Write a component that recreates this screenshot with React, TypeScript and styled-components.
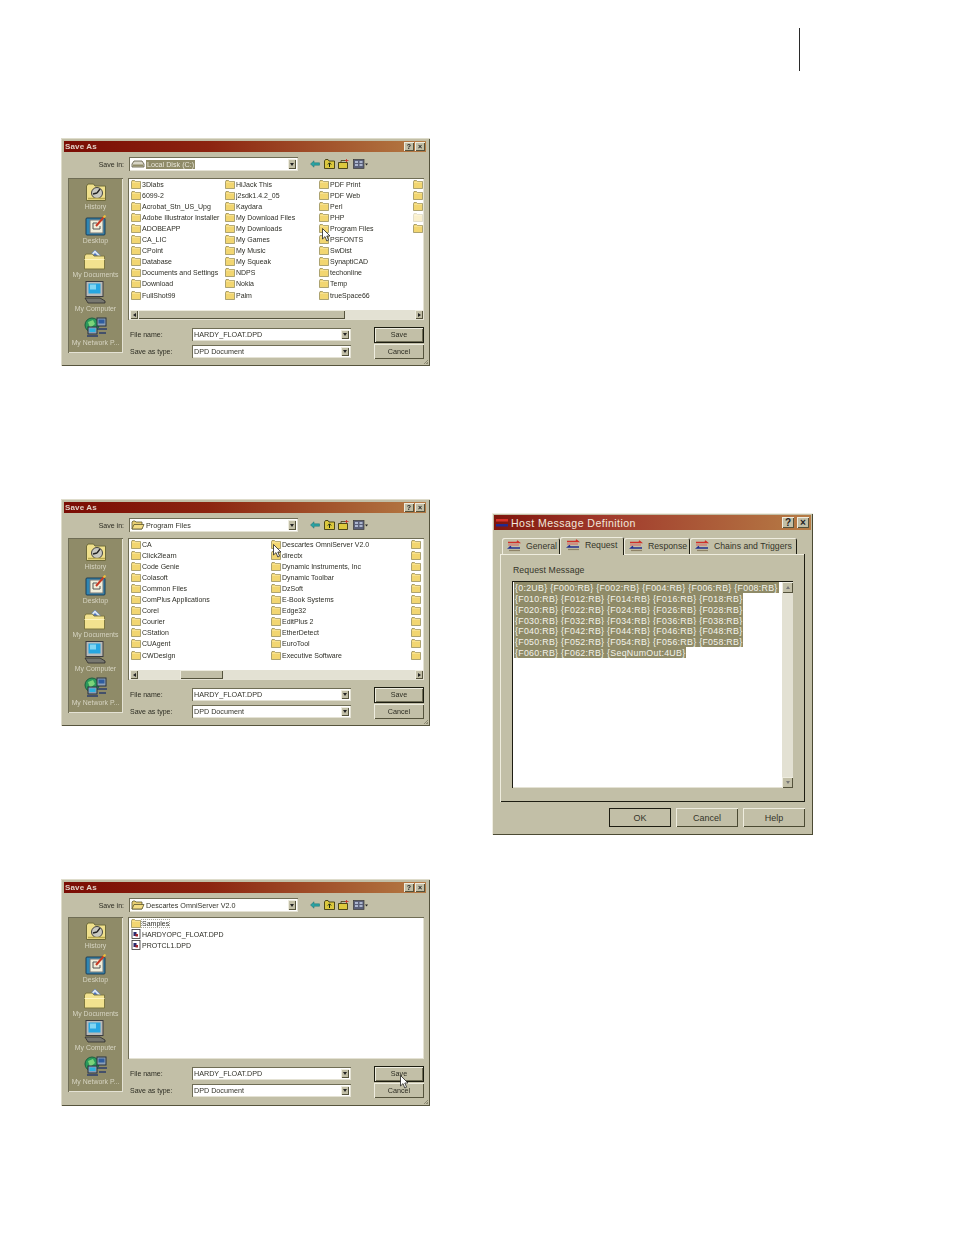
import type { ReactNode } from 'react';
import { createGlobalStyle, styled } from 'styled-components';

const GlobalStyle = createGlobalStyle`
  html, body { margin: 0; padding: 0; background: #fff; }
  body { font-family: "Liberation Sans", Arial, sans-serif; color: #1c1c14; }
`;

const FACE = '#c2bfa7';
const OLIVE = '#8f8b68';
const raised = `inset 1px 1px 0 #eeecdf, inset -1px -1px 0 #55533c`;
const sunken = `inset 1px 1px 0 #6f6d55, inset -1px -1px 0 #e4e2d4`;

const Page = styled.div`
  width: 954px;
  height: 1235px;
  overflow: hidden;
  padding-top: 28px;
  box-sizing: border-box;
`;

const PageRule = styled.div`
  width: 1px;
  height: 43px;
  margin-left: 799px;
  background: #2a2a2a;
`;

const Columns = styled.main`
  display: grid;
  grid-template-columns: 369px 321px;
  column-gap: 62px;
  padding: 67px 0 0 61px;
  align-items: start;
`;

const LeftColumn = styled.div`
  display: flex;
  flex-direction: column;
`;

const Dialog = styled.section<{ $top: number; $height: number }>`
  position: relative;
  box-sizing: border-box;
  display: flex;
  flex-direction: column;
  height: ${({ $height }) => $height}px;
  margin-top: ${({ $top }) => $top}px;
  padding: 3px 4px 3px 3px;
  background: ${FACE};
  box-shadow: inset 1px 1px 0 #dedccb, inset -1px -1px 0 #55533c;
  filter: blur(0.4px);
  &::after {
    content: '';
    position: absolute;
    right: 2px;
    bottom: 2px;
    width: 6px;
    height: 6px;
    background: repeating-linear-gradient(135deg, transparent 0 1px, #8a8870 1px 2px);
    clip-path: polygon(100% 0, 100% 100%, 0 100%);
  }
`;

const TitleBar = styled.header`
  display: flex;
  align-items: center;
  justify-content: space-between;
  flex: none;
  height: 11px;
  padding: 0 1px;
  background: linear-gradient(90deg, #7a0c04 0%, #8c2410 40%, #b57b44 100%);
`;

const TitleText = styled.span`
  font-size: 8px;
  font-weight: 700;
  color: #e0d0c6;
  letter-spacing: 0.15px;
`;

const TitleButtons = styled.div`
  display: flex;
  gap: 1px;
`;

const TitleButton = styled.span`
  display: flex;
  align-items: center;
  justify-content: center;
  width: 10px;
  height: 9px;
  background: ${FACE};
  box-shadow: ${raised};
  font-size: 7px;
  font-weight: 700;
  line-height: 1;
  color: #222;
`;

const SaveInRow = styled.div`
  display: flex;
  align-items: center;
  flex: none;
  height: 14px;
  margin-top: 5px;
`;

const Label = styled.span<{ $width: number; $right?: boolean }>`
  flex: none;
  width: ${({ $width }) => $width}px;
  font-size: 7px;
  color: #2c2c22;
  white-space: nowrap;
  text-align: ${({ $right }) => ($right ? 'right' : 'left')};
`;

const Combo = styled.div<{ $width: number; $height: number; $left: number }>`
  display: flex;
  align-items: center;
  justify-content: space-between;
  flex: none;
  box-sizing: border-box;
  width: ${({ $width }) => $width}px;
  height: ${({ $height }) => $height}px;
  margin-left: ${({ $left }) => $left}px;
  padding: 2px;
  background: #fff;
  box-shadow: ${sunken};
`;

const ComboValue = styled.span`
  display: flex;
  align-items: center;
  gap: 1px;
  min-width: 0;
  font-size: 7.2px;
  white-space: nowrap;
  color: #33332a;
`;

const Selected = styled.span`
  padding: 0 1px;
  background: ${OLIVE};
  color: #e8e6d8;
`;

const ArrowButton = styled.span`
  display: flex;
  align-items: center;
  justify-content: center;
  flex: none;
  width: 8px;
  height: 100%;
  background: ${FACE};
  box-shadow: ${raised};
  &::after {
    content: '';
    border: 2px solid transparent;
    border-top: 3px solid #222;
    border-bottom: 0;
  }
`;

const Toolbar = styled.div`
  display: flex;
  align-items: center;
  gap: 3.5px;
  margin-left: 12px;
`;

const Body = styled.div<{ $top: number }>`
  display: flex;
  flex: 1;
  gap: 5px;
  margin-top: ${({ $top }) => $top}px;
  min-height: 0;
  padding-left: 4px;
`;

const PlacesBar = styled.nav`
  display: flex;
  flex-direction: column;
  align-items: center;
  flex: none;
  box-sizing: border-box;
  width: 55px;
  height: 175px;
  background: ${OLIVE};
  box-shadow: ${sunken};
`;

const Place = styled.div`
  display: flex;
  flex-direction: column;
  align-items: center;
  height: 34px;
  font-size: 6.9px;
  white-space: nowrap;
  color: #d6d4c2;
  line-height: 9px;
`;

const PlaceIcon = styled.div`
  display: flex;
  align-items: flex-end;
  justify-content: center;
  height: 24px;
`;

const MainArea = styled.div`
  display: flex;
  flex-direction: column;
  flex: 1;
  min-width: 0;
  padding-right: 2px;
`;

const ListFrame = styled.div<{ $height: number }>`
  display: flex;
  flex-direction: column;
  flex: none;
  box-sizing: border-box;
  height: ${({ $height }) => $height}px;
  padding: 0 1px 1px 3px;
  background: #fff;
  box-shadow: ${sunken};
  overflow: hidden;
`;

const FileGrid = styled.div<{ $col: number }>`
  display: grid;
  flex: 1;
  grid-auto-flow: column;
  grid-template-rows: repeat(11, 11.12px);
  grid-auto-columns: ${({ $col }) => $col}px;
  align-content: start;
  padding-top: 0.5px;
  overflow: hidden;
`;

const FileItem = styled.div<{ $dim?: boolean }>`
  display: flex;
  align-items: center;
  gap: 1px;
  height: 11px;
  font-size: 7px;
  white-space: nowrap;
  color: #2e2e26;
  opacity: ${({ $dim }) => ($dim ? 0.35 : 1)};
`;

const FocusName = styled.span`
  outline: 1px dotted #a8a89c;
`;

const ScrollBar = styled.div`
  display: flex;
  flex: none;
  height: 9px;
  margin-left: -1px;
  background: #e3e1d3;
`;

const ScrollEnd = styled.span<{ $dir: 'left' | 'right' }>`
  display: flex;
  align-items: center;
  justify-content: center;
  flex: none;
  width: 8px;
  background: ${FACE};
  box-shadow: ${raised};
  &::after {
    content: '';
    border: 2px solid transparent;
    ${({ $dir }) => ($dir === 'left' ? 'border-right: 3px solid #222; border-left: 0;' : 'border-left: 3px solid #222; border-right: 0;')}
  }
`;

const ScrollTrack = styled.div`
  flex: 1;
  min-width: 0;
`;

const ScrollThumb = styled.div<{ $left: number; $width: number }>`
  height: 100%;
  width: ${({ $width }) => $width}px;
  margin-left: ${({ $left }) => $left}px;
  background: ${FACE};
  box-shadow: ${raised};
`;

const FormRow = styled.div<{ $top: number }>`
  display: flex;
  align-items: center;
  height: 13px;
  margin-top: ${({ $top }) => $top}px;
  padding-left: 2px;
`;

const DialogButton = styled.button<{ $default?: boolean; $width: number; $height: number }>`
  flex: none;
  width: ${({ $width }) => $width}px;
  height: ${({ $height }) => $height}px;
  margin-left: 23px;
  padding: 0;
  border: 0;
  background: ${FACE};
  font-family: inherit;
  font-size: 7.2px;
  color: #2c2c22;
  box-shadow: ${({ $default }) => ($default ? 'inset 0 0 0 1px #1c1c10, inset 2px 2px 0 #eeecdf, inset -2px -2px 0 #6f6d55' : raised)};
`;

const Cursor = styled.svg<{ $x: number; $y: number }>`
  position: absolute;
  left: ${({ $x }) => $x}px;
  top: ${({ $y }) => $y}px;
`;

/* Host Message Definition dialog */

const HostDialog = styled.section`
  box-sizing: border-box;
  display: flex;
  flex-direction: column;
  height: 322px;
  margin-top: 375px;
  padding: 2px;
  background: ${FACE};
  box-shadow: inset 1px 1px 0 #f0eee2, inset -1px -1px 0 #4b4a33;
`;

const HostTitleBar = styled.header`
  display: flex;
  align-items: center;
  justify-content: space-between;
  flex: none;
  height: 15px;
  padding: 0 2px;
  background: linear-gradient(90deg, #7f150c 0%, #a13a2c 35%, #b67c45 100%);
`;

const HostTitle = styled.span`
  display: flex;
  align-items: center;
  gap: 2px;
  font-size: 10.6px;
  letter-spacing: 0.44px;
  color: #f1e7dc;
`;

const HostTitleButtons = styled.div`
  display: flex;
  gap: 3px;
`;

const HostTitleButton = styled(TitleButton)`
  width: 12px;
  height: 11px;
  font-size: 10px;
`;

const TabRow = styled.div`
  position: relative;
  z-index: 1;
  display: flex;
  align-items: flex-end;
  flex: none;
  height: 24px;
  padding-left: 8px;
`;

const Tab = styled.div<{ $active?: boolean; $width: number }>`
  display: flex;
  align-items: center;
  box-sizing: border-box;
  gap: 5px;
  width: ${({ $width }) => $width}px;
  height: ${({ $active }) => ($active ? 18 : 16)}px;
  padding: ${({ $active }) => ($active ? '0 0 3px 6px' : '0 0 0 5px')};
  margin-bottom: ${({ $active }) => ($active ? -1 : 0)}px;
  background: ${FACE};
  border-radius: 2px 2px 0 0;
  font-size: 8.7px;
  white-space: nowrap;
  color: #35352a;
  box-shadow: inset 1px 1px 0 #efeddf, inset -1px 0 0 #1d1d12;
`;

const TabPanel = styled.div`
  display: flex;
  flex-direction: column;
  flex: none;
  box-sizing: border-box;
  width: 305px;
  height: 248px;
  margin-left: 6px;
  padding: 11px 12px 0;
  box-shadow: inset 1px 0 0 #efeddf, inset -1px -1px 0 #1d1d12, inset 0 1px 0 #efeddf;
`;

const PanelLabel = styled.div`
  padding-left: 1px;
  font-size: 8.7px;
  line-height: 11px;
  letter-spacing: 0.1px;
  color: #35352a;
`;

const MessageBox = styled.div`
  display: flex;
  justify-content: space-between;
  box-sizing: border-box;
  flex: none;
  width: 281px;
  height: 207px;
  margin-top: 5px;
  padding: 1px 0 0 2px;
  background: #fff;
  box-shadow: inset 1px 1px 0 #1d1d12, inset -1px -1px 0 #e4e2d4;
`;

const MessageText = styled.div`
  display: flex;
  flex-direction: column;
  align-items: flex-start;
  min-width: 0;
`;

const MessageLine = styled.span`
  height: 10.85px;
  padding: 0 1px;
  background: ${OLIVE};
  font-size: 8.8px;
  line-height: 12.5px;
  letter-spacing: 0.3px;
  white-space: pre;
  color: #f4f3ea;
`;

const VerticalBar = styled.div`
  display: flex;
  flex-direction: column;
  justify-content: space-between;
  flex: none;
  width: 11px;
  background: #e3e1d3;
`;

const VerticalEnd = styled.span<{ $dir: 'up' | 'down' }>`
  display: flex;
  align-items: center;
  justify-content: center;
  height: 11px;
  background: ${FACE};
  box-shadow: ${raised};
  &::after {
    content: '';
    border: 2.5px solid transparent;
    ${({ $dir }) => ($dir === 'up' ? 'border-bottom: 3px solid #777; border-top: 0;' : 'border-top: 3px solid #777; border-bottom: 0;')}
  }
`;

const HostFooter = styled.footer`
  display: flex;
  justify-content: flex-end;
  gap: 5px;
  flex: none;
  width: 311px;
  margin-top: 6px;
`;

const HostButton = styled.button<{ $default?: boolean }>`
  width: 62px;
  height: 19px;
  padding: 0;
  border: 0;
  background: ${FACE};
  font-family: inherit;
  font-size: 9px;
  color: #35352a;
  box-shadow: ${({ $default }) => ($default ? 'inset 0 0 0 1px #1d1d12' : 'inset 1px 1px 0 #efeddf, inset -1px -1px 0 #4b4a33')};
`;

const FolderIcon = () => (
  <svg width="10" height="9" viewBox="0 0 10 9" style={{ flex: 'none' }}>
    <path d="M0.5 2V8.5H9.5V1.5H4.5L3.5 0.5H1Z" fill="#f2d671" stroke="#7a7240" strokeWidth="0.6" />
    <path d="M1 2.3H9" stroke="#fbeeb0" strokeWidth="0.6" />
  </svg>
);

const DocIcon = () => (
  <svg width="10" height="10" viewBox="0 0 10 10" style={{ flex: 'none' }}>
    <rect x="1" y="0.5" width="8" height="9" fill="#fff" stroke="#333" strokeWidth="0.8" />
    <rect x="2.5" y="3" width="3" height="4" fill="#2b2b6e" />
    <rect x="4.5" y="5" width="2.5" height="2.5" fill="#a3262a" />
  </svg>
);

const OpenFolderIcon = () => (
  <svg width="14" height="10" viewBox="0 0 14 10" style={{ flex: 'none' }}>
    <path d="M1 2V9H11V2H5L4 1H2Z" fill="#e9cf72" stroke="#5b5530" strokeWidth="0.8" />
    <path d="M3 4.5H13L11 9H1Z" fill="#f4dd85" stroke="#5b5530" strokeWidth="0.8" />
  </svg>
);

const DriveIcon = () => (
  <svg width="14" height="10" viewBox="0 0 14 10" style={{ flex: 'none' }}>
    <path d="M3 2H11L13 5V8H1V5Z" fill="#d8d6c8" stroke="#55533c" strokeWidth="0.8" />
    <rect x="2" y="5.5" width="10" height="2" fill="#8f8b68" />
  </svg>
);

const ToolIcons = () => (
  <Toolbar>
    <svg width="10" height="8" viewBox="0 0 10 8">
      <path d="M0.5 4L4 0.8V2.8H9.5V5.2H4V7.2Z" fill="#2aa3a3" stroke="#1f6f70" strokeWidth="0.5" />
    </svg>
    <svg width="11" height="10" viewBox="0 0 11 10">
      <path d="M0.5 2V9.5H10.5V2H5L4 0.5H1.5Z" fill="#dcc83e" stroke="#3f3a10" strokeWidth="0.9" />
      <path d="M5.5 8V4M3.8 5.5L5.5 3.8L7.2 5.5" fill="none" stroke="#1d2a10" strokeWidth="1" />
    </svg>
    <svg width="11" height="10" viewBox="0 0 11 10">
      <path d="M0.5 3.5V9.5H9.5V3.5Z" fill="#dcc83e" stroke="#3f3a10" strokeWidth="0.9" />
      <path d="M3 3.5V1.5H8" fill="none" stroke="#3f3a10" strokeWidth="0.8" />
      <path d="M8.5 0V3M7 1.5H10.5" stroke="#c3392b" strokeWidth="0.9" />
    </svg>
    <svg width="15" height="10" viewBox="0 0 15 10">
      <rect x="0.5" y="0.5" width="10.5" height="9" fill="#5a5f78" stroke="#3a3a38" strokeWidth="0.7" />
      <path d="M2 3H5M2 6H5M6.5 3H9.5M6.5 6H9.5" stroke="#c8d4ea" strokeWidth="1.3" />
      <path d="M12 4.5H15L13.5 6.5Z" fill="#222" />
    </svg>
  </Toolbar>
);

const HistoryIcon = () => (
  <svg width="22" height="19" viewBox="0 0 22 19">
    <path d="M1.5 3V17.5H20.5V3H10L8.5 1H3Z" fill="#efe08b" stroke="#6d6a3c" />
    <circle cx="12" cy="10" r="5.5" fill="#c8c8c0" stroke="#444" />
    <path d="M12 10L15 6M12 10L8 11" stroke="#222" strokeWidth="1.3" />
    <path d="M3 15.5H20" stroke="#b9a94f" strokeWidth="1.5" />
  </svg>
);

const DesktopIcon = () => (
  <svg width="22" height="21" viewBox="0 0 22 21">
    <rect x="1" y="3" width="19" height="17" rx="1" fill="#2f86b3" stroke="#1c3c54" />
    <rect x="5" y="5" width="13" height="13" fill="#f1efdc" stroke="#777" />
    <path d="M8 8H12M8 8V14H15V11" fill="none" stroke="#555" />
    <path d="M11 11L19 2" stroke="#c83a24" strokeWidth="2" />
    <path d="M18.5 2.5L20.5 0.5" stroke="#e9c13c" strokeWidth="2" />
  </svg>
);

const DocumentsIcon = () => (
  <svg width="24" height="21" viewBox="0 0 24 21">
    <path d="M5 8L12 1L19 8Z" fill="#d8e4f2" stroke="#7d93b3" />
    <path d="M9 7L12 4L15 7Z" fill="#4e74c2" />
    <path d="M1.5 7V20H21.5V7H11L9.5 5H3Z" fill="#f2e28f" stroke="#7c7640" />
    <path d="M1.5 10.5H21.5" stroke="#fff5bd" />
  </svg>
);

const ComputerIcon = () => (
  <svg width="22" height="23" viewBox="0 0 22 23">
    <rect x="2" y="0.5" width="17" height="15" fill="#b9bab8" stroke="#3c3c40" />
    <rect x="4.5" y="2.5" width="12" height="10" fill="#26a6e2" />
    <rect x="6" y="3.5" width="6" height="5" fill="#83d6f2" />
    <path d="M1 17H16L21 20V22H4Z" fill="#77776f" stroke="#2c2c2c" strokeWidth="0.8" />
  </svg>
);

const NetworkIcon = () => (
  <svg width="24" height="21" viewBox="0 0 24 21">
    <circle cx="8" cy="8" r="7" fill="#2a9a5b" stroke="#1d5e40" />
    <path d="M4 5L9 3L11 7L6 11Z" fill="#7cd47b" />
    <rect x="13" y="1" width="9" height="8" fill="#8da0b8" stroke="#27303c" />
    <rect x="14.5" y="2.5" width="6" height="4" fill="#2f5c9e" />
    <rect x="4" y="10" width="9" height="7" fill="#8da0b8" stroke="#27303c" />
    <rect x="5.5" y="11.5" width="6" height="3.5" fill="#2bb0dd" />
    <path d="M3 18H14V20H3ZM14 11H23V13H14ZM15 15H22V17H15Z" fill="#44506a" />
  </svg>
);

const places = [
  { name: 'History', icon: <HistoryIcon /> },
  { name: 'Desktop', icon: <DesktopIcon /> },
  { name: 'My Documents', icon: <DocumentsIcon /> },
  { name: 'My Computer', icon: <ComputerIcon /> },
  { name: 'My Network P...', icon: <NetworkIcon /> },
];

const PointerIcon = ({ x, y }: { x: number; y: number }) => (
  <Cursor $x={x} $y={y} width="9" height="14" viewBox="0 0 9 14">
    <path d="M0.5 0.5V11L3 8.6L4.8 13L6.6 12.2L4.8 8H8Z" fill="#fff" stroke="#222" strokeWidth="0.8" />
  </Cursor>
);

type FileEntry = { name: string; kind?: 'doc'; dim?: boolean; focus?: boolean };

const names = (...list: string[]): FileEntry[] => list.map((name) => ({ name }));

const localDisk: FileEntry[] = [
  ...names('3Dlabs', '6099-2', 'Acrobat_Stn_US_Upg', 'Adobe Illustrator Installer', 'ADOBEAPP', 'CA_LIC', 'CPoint', 'Database', 'Documents and Settings', 'Download', 'FullShot99'),
  ...names('HiJack This', 'j2sdk1.4.2_05', 'Kaydara', 'My Download Files', 'My Downloads', 'My Games', 'My Music', 'My Squeak', 'NDPS', 'Nokia', 'Palm'),
  ...names('PDF Print', 'PDF Web', 'Perl', 'PHP', 'Program Files', 'PSFONTS', 'SwDist', 'SynaptiCAD', 'techonline', 'Temp', 'trueSpace66'),
  { name: '' }, { name: '' }, { name: '' }, { name: '', dim: true }, { name: '' },
];

const programFiles: FileEntry[] = [
  ...names('CA', 'Click2learn', 'Code Genie', 'Colasoft', 'Common Files', 'ComPlus Applications', 'Corel', 'Courier', 'CStation', 'CUAgent', 'CWDesign'),
  ...names('Descartes OmniServer V2.0', 'directx', 'Dynamic Instruments, Inc', 'Dynamic Toolbar', 'DzSoft', 'E-Book Systems', 'Edge32', 'EditPlus 2', 'EtherDetect', 'EuroTool', 'Executive Software'),
  ...names('', '', '', '', '', '', '', '', '', '', ''),
];

const omniServer: FileEntry[] = [
  { name: 'Samples', focus: true },
  { name: 'HARDYOPC_FLOAT.DPD', kind: 'doc' },
  { name: 'PROTCL1.DPD', kind: 'doc' },
];

type SaveAsProps = {
  top: number;
  height: number;
  bodyTop: number;
  folderIcon: ReactNode;
  folder: ReactNode;
  files: FileEntry[];
  column: number;
  thumb?: { left: number; width: number };
  cursor: { x: number; y: number };
};

const SaveAsDialog = ({ top, height, bodyTop, folderIcon, folder, files, column, thumb, cursor }: SaveAsProps) => (
  <Dialog $top={top} $height={height}>
    <TitleBar>
      <TitleText>Save As</TitleText>
      <TitleButtons>
        <TitleButton>?</TitleButton>
        <TitleButton>×</TitleButton>
      </TitleButtons>
    </TitleBar>
    <SaveInRow>
      <Label $width={60} $right>Save in:</Label>
      <Combo $width={169} $height={14} $left={5}>
        <ComboValue>{folderIcon}{folder}</ComboValue>
        <ArrowButton />
      </Combo>
      <ToolIcons />
    </SaveInRow>
    <Body $top={bodyTop}>
      <PlacesBar>
        {places.map((place) => (
          <Place key={place.name}>
            <PlaceIcon>{place.icon}</PlaceIcon>
            {place.name}
          </Place>
        ))}
      </PlacesBar>
      <MainArea>
        <ListFrame $height={142}>
          <FileGrid $col={column}>
            {files.map((file, index) => (
              <FileItem key={index} $dim={file.dim}>
                {file.kind === 'doc' ? <DocIcon /> : <FolderIcon />}
                {file.focus ? <FocusName>{file.name}</FocusName> : file.name}
              </FileItem>
            ))}
          </FileGrid>
          {thumb && (
            <ScrollBar>
              <ScrollEnd $dir="left" />
              <ScrollTrack>
                <ScrollThumb $left={thumb.left} $width={thumb.width} />
              </ScrollTrack>
              <ScrollEnd $dir="right" />
            </ScrollBar>
          )}
        </ListFrame>
        <FormRow $top={8}>
          <Label $width={62}>File name:</Label>
          <Combo $width={159} $height={13} $left={0}>
            <ComboValue>HARDY_FLOAT.DPD</ComboValue>
            <ArrowButton />
          </Combo>
          <DialogButton $default $width={50} $height={16}>Save</DialogButton>
        </FormRow>
        <FormRow $top={4}>
          <Label $width={62}>Save as type:</Label>
          <Combo $width={159} $height={13} $left={0}>
            <ComboValue>DPD Document</ComboValue>
            <ArrowButton />
          </Combo>
          <DialogButton $width={50} $height={15}>Cancel</DialogButton>
        </FormRow>
      </MainArea>
    </Body>
    <PointerIcon x={cursor.x} y={cursor.y} />
  </Dialog>
);

const TabIcon = () => (
  <svg width="14" height="12" viewBox="0 0 14 12" style={{ flex: 'none' }}>
    <path d="M1 2.5H12L10 0.8" fill="none" stroke="#d0302a" strokeWidth="1.5" />
    <path d="M1 5H12" stroke="#d8706a" strokeWidth="1.2" />
    <path d="M13 8H2L4 6.4" fill="none" stroke="#22308f" strokeWidth="1.5" />
    <path d="M2 10.5H13" stroke="#8f8468" strokeWidth="1.2" />
  </svg>
);

const HostIcon = () => (
  <svg width="13" height="11" viewBox="0 0 13 11" style={{ flex: 'none' }}>
    <rect x="0" y="2" width="12" height="2.5" fill="#d8322a" />
    <rect x="0" y="7" width="12" height="2.5" fill="#242a8c" />
  </svg>
);

const messageLines = [
  '{0:2UB} {F000:RB} {F002:RB} {F004:RB} {F006:RB} {F008:RB}',
  '{F010:RB} {F012:RB} {F014:RB} {F016:RB} {F018:RB}',
  '{F020:RB} {F022:RB} {F024:RB} {F026:RB} {F028:RB}',
  '{F030:RB} {F032:RB} {F034:RB} {F036:RB} {F038:RB}',
  '{F040:RB} {F042:RB} {F044:RB} {F046:RB} {F048:RB}',
  '{F050:RB} {F052:RB} {F054:RB} {F056:RB} {F058:RB}',
  '{F060:RB} {F062:RB} {SeqNumOut:4UB}',
];

const tabs = [
  { name: 'General', width: 58 },
  { name: 'Request', width: 64, active: true },
  { name: 'Response', width: 66 },
  { name: 'Chains and Triggers', width: 107 },
];

const App = () => (
  <Page>
    <GlobalStyle />
    <PageRule />
    <Columns>
      <LeftColumn>
        <SaveAsDialog
          top={0}
          height={228}
          bodyTop={7}
          folderIcon={<DriveIcon />}
          folder={<Selected>Local Disk (C:)</Selected>}
          files={localDisk}
          column={94}
          thumb={{ left: 0, width: 207 }}
          cursor={{ x: 261, y: 90 }}
        />
        <SaveAsDialog
          top={133}
          height={227}
          bodyTop={6}
          folderIcon={<OpenFolderIcon />}
          folder="Program Files"
          files={programFiles}
          column={140}
          thumb={{ left: 42, width: 43 }}
          cursor={{ x: 212, y: 45 }}
        />
        <SaveAsDialog
          top={153}
          height={227}
          bodyTop={5}
          folderIcon={<OpenFolderIcon />}
          folder="Descartes OmniServer V2.0"
          files={omniServer}
          column={140}
          cursor={{ x: 339, y: 196 }}
        />
      </LeftColumn>
      <HostDialog>
        <HostTitleBar>
          <HostTitle><HostIcon />Host Message Definition</HostTitle>
          <HostTitleButtons>
            <HostTitleButton>?</HostTitleButton>
            <HostTitleButton>×</HostTitleButton>
          </HostTitleButtons>
        </HostTitleBar>
        <TabRow>
          {tabs.map((tab) => (
            <Tab key={tab.name} $active={tab.active} $width={tab.width}>
              <TabIcon />
              {tab.name}
            </Tab>
          ))}
        </TabRow>
        <TabPanel>
          <PanelLabel>Request Message</PanelLabel>
          <MessageBox>
            <MessageText>
              {messageLines.map((line) => (
                <MessageLine key={line}>{line}</MessageLine>
              ))}
            </MessageText>
            <VerticalBar>
              <VerticalEnd $dir="up" />
              <VerticalEnd $dir="down" />
            </VerticalBar>
          </MessageBox>
        </TabPanel>
        <HostFooter>
          <HostButton $default>OK</HostButton>
          <HostButton>Cancel</HostButton>
          <HostButton>Help</HostButton>
        </HostFooter>
      </HostDialog>
    </Columns>
  </Page>
);

export default App;
